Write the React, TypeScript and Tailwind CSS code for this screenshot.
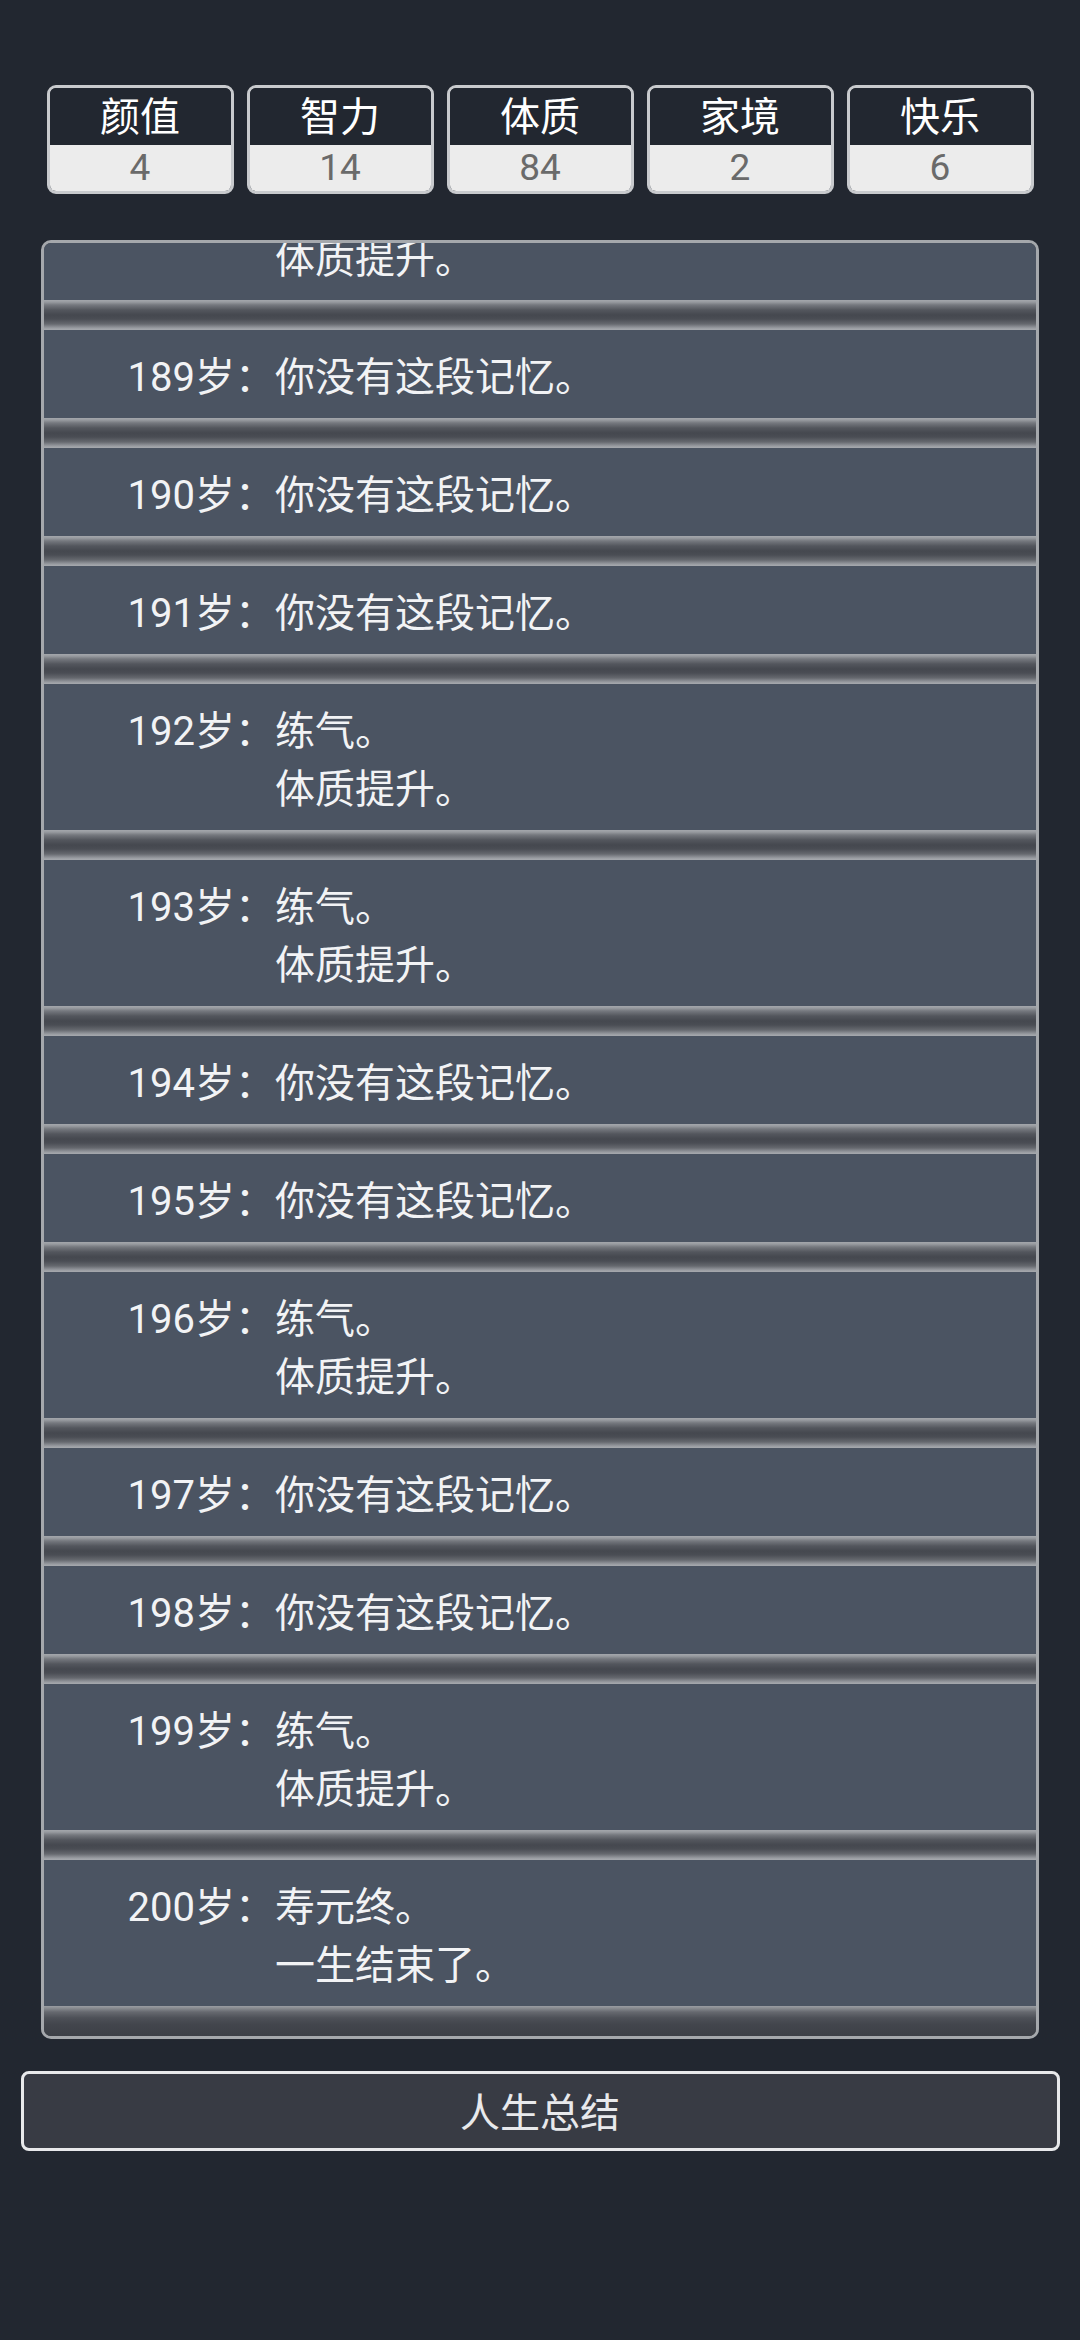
import { useLayoutEffect, useRef } from "react";

const stats: [string, string][] = [
  ["颜值", "4"],
  ["智力", "14"],
  ["体质", "84"],
  ["家境", "2"],
  ["快乐", "6"],
];

type Ev = { age: number; lines: string[] };

const NONE = ["你没有这段记忆。"];
const QI = ["练气。", "体质提升。"];

const events: Ev[] = [
  { age: 188, lines: QI },
  { age: 189, lines: NONE },
  { age: 190, lines: NONE },
  { age: 191, lines: NONE },
  { age: 192, lines: QI },
  { age: 193, lines: QI },
  { age: 194, lines: NONE },
  { age: 195, lines: NONE },
  { age: 196, lines: QI },
  { age: 197, lines: NONE },
  { age: 198, lines: NONE },
  { age: 199, lines: QI },
  { age: 200, lines: ["寿元终。", "一生结束了。"] },
];

function Separator({ last }: { last: boolean }) {
  if (last) {
    return (
      <div className="h-[30px] w-full bg-[linear-gradient(to_bottom,#9a9da2_0px,#8a8d92_2px,#66696f_6px,#4d5057_12px,#43464d_18px,#3d4047_30px)]" />
    );
  }
  return (
    <div className="h-[30px] w-full bg-[linear-gradient(to_bottom,#a4a7ac_0px,#989ba0_2px,#75787e_5px,#53565d_10px,#45484f_15px,#4a4d54_19px,#66696f_24px,#8c8f95_27px,#a2a5aa_29px,#a4a7ac_30px)]" />
  );
}

export default function App() {
  const scrollRef = useRef<HTMLDivElement>(null);

  useLayoutEffect(() => {
    const el = scrollRef.current;
    if (el) el.scrollTop = el.scrollHeight;
  }, []);

  return (
    <div className="min-h-[2340px] w-full bg-[#222730] flex flex-col items-center pt-[85px] font-['Roboto','Noto_Sans_CJK_SC',sans-serif]">
      {/* Stats */}
      <div className="grid grid-cols-5 gap-[13px] w-[987px]">
        {stats.map(([label, value]) => (
          <div
            key={label}
            className="border-[3px] border-[#c8cacd] rounded-[9px] overflow-hidden flex flex-col"
          >
            <div className="h-[57px] pt-[3px] bg-[#222730] flex items-center justify-center text-[40px] leading-[48px] text-white">
              {label}
            </div>
            <div className="h-[46px] bg-[#ececec] flex items-center justify-center text-[37px] leading-[44px] text-[#6a6a6a]">
              {value}
            </div>
          </div>
        ))}
      </div>

      {/* Event log */}
      <div className="mt-[46px] w-[998px] h-[1799px] border-[3px] border-[#a5a8ac] rounded-[10px] overflow-hidden bg-[#3d4047]">
        <div
          ref={scrollRef}
          className="h-full overflow-y-auto [scrollbar-width:none]"
        >
          {events.map((ev, i) => (
            <div key={ev.age}>
              <div className="bg-[#4b5462] flex pt-[19px] pb-[11px] text-[40px] leading-[58px] text-[#f2f3f5]">
                <span className="w-[231px] shrink-0 text-right">{ev.age}岁：</span>
                <div className="flex flex-col">
                  {ev.lines.map((l) => (
                    <span key={l}>{l}</span>
                  ))}
                </div>
              </div>
              <Separator last={i === events.length - 1} />
            </div>
          ))}
        </div>
      </div>

      {/* Button */}
      <button className="mt-[32px] w-[1039px] h-[80px] pt-[5px] border-[3px] border-[#e8e9eb] rounded-[8px] bg-[#383b44] text-[40px] leading-[48px] text-[#e8e9ec] flex items-center justify-center">
        人生总结
      </button>
    </div>
  );
}
